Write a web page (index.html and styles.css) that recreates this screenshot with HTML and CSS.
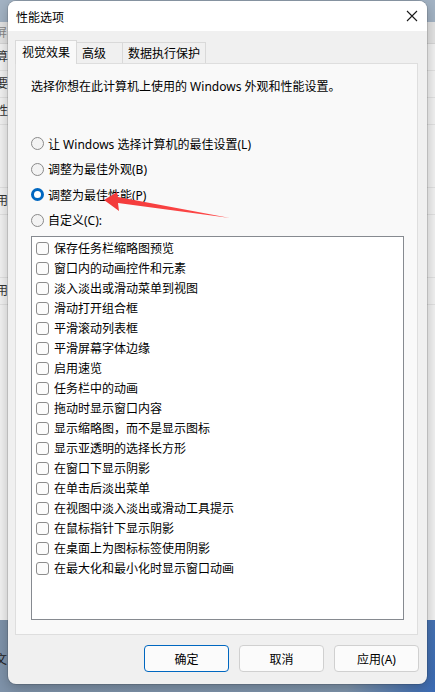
FILE: index.html
```html
<!DOCTYPE html>
<html lang="zh-CN">
<head>
    <meta charset="UTF-8">
    <meta name="viewport" content="width=device-width, initial-scale=1.0">
    <title>性能选项</title>
    <link rel="stylesheet" href="styles.css">
</head>
<body>
    <div class="desktop">
        <div class="bg-top"></div>
        <div class="bg-window">
            <div class="bg-toolbar">屏</div>
            <div class="bg-item">算</div>
            <div class="bg-item">要</div>
            <div class="bg-item">性</div>
            <div class="bg-gap"></div>
            <div class="bg-item">用</div>
            <div class="bg-gap"></div>
            <div class="bg-item">用</div>
        </div>
        <div class="bg-bottom">
            <div class="bg-icon">文</div>
        </div>
    </div>

    <div class="dialog">
        <div class="titlebar">
            <span class="title">性能选项</span>
            <svg class="close" width="12" height="12" viewBox="0 0 12 12">
                <path d="M1 1 L11 11 M11 1 L1 11" stroke="#1a1a1a" stroke-width="1.1" fill="none"/>
            </svg>
        </div>

        <div class="content">
            <ul class="tabs">
                <li class="tab active">视觉效果</li>
                <li class="tab">高级</li>
                <li class="tab">数据执行保护</li>
            </ul>

            <div class="panel">
                <p class="intro">选择你想在此计算机上使用的 Windows 外观和性能设置。</p>

                <div class="radios">
                    <label class="radio"><span class="dot"></span>让 Windows 选择计算机的最佳设置(L)</label>
                    <label class="radio"><span class="dot"></span>调整为最佳外观(B)</label>
                    <label class="radio"><span class="dot checked"></span>调整为最佳性能(P)</label>
                    <label class="radio"><span class="dot"></span>自定义(C):</label>
                </div>

                <div class="listbox">
                    <div class="check"><span class="box"></span>保存任务栏缩略图预览</div>
                    <div class="check"><span class="box"></span>窗口内的动画控件和元素</div>
                    <div class="check"><span class="box"></span>淡入淡出或滑动菜单到视图</div>
                    <div class="check"><span class="box"></span>滑动打开组合框</div>
                    <div class="check"><span class="box"></span>平滑滚动列表框</div>
                    <div class="check"><span class="box"></span>平滑屏幕字体边缘</div>
                    <div class="check"><span class="box"></span>启用速览</div>
                    <div class="check"><span class="box"></span>任务栏中的动画</div>
                    <div class="check"><span class="box"></span>拖动时显示窗口内容</div>
                    <div class="check"><span class="box"></span>显示缩略图，而不是显示图标</div>
                    <div class="check"><span class="box"></span>显示亚透明的选择长方形</div>
                    <div class="check"><span class="box"></span>在窗口下显示阴影</div>
                    <div class="check"><span class="box"></span>在单击后淡出菜单</div>
                    <div class="check"><span class="box"></span>在视图中淡入淡出或滑动工具提示</div>
                    <div class="check"><span class="box"></span>在鼠标指针下显示阴影</div>
                    <div class="check"><span class="box"></span>在桌面上为图标标签使用阴影</div>
                    <div class="check"><span class="box"></span>在最大化和最小化时显示窗口动画</div>
                </div>

                <!-- red annotation arrow drawn over the radio list -->
                <svg class="arrow" width="140" height="40" viewBox="0 0 140 40">
                    <defs>
                        <linearGradient id="ar" x1="0" y1="0" x2="1" y2="0">
                            <stop offset="0" stop-color="#f23a3a"/>
                            <stop offset="1" stop-color="#ff4a4a"/>
                        </linearGradient>
                    </defs>
                    <polygon points="2,11 15,3 16,8 128,29 16,14 17,22" fill="url(#ar)"/>
                </svg>
            </div>

            <div class="buttons">
                <button class="btn default">确定</button>
                <button class="btn">取消</button>
                <button class="btn">应用(A)</button>
            </div>
        </div>
    </div>
</body>
</html>
```

FILE: styles.css
```css
html, body {
    margin: 0;
    padding: 0;
}

body {
    width: 435px;
    height: 692px;
    overflow: hidden;
    position: relative;
    font-family: "Noto Sans", "Noto Sans CJK SC", sans-serif;
    font-size: 12px;
    color: #000;
}

/* desktop behind the dialog */
.desktop {
    height: 692px;
    display: flex;
    flex-direction: column;
}

.bg-top {
    height: 22px;
    background-color: #a3b3c4;
}

.bg-window {
    height: 598px;
    background-color: #f3f3f3;
    color: #333;
}

.bg-toolbar {
    height: 21px;
    line-height: 21px;
    background-color: #e4e4e4;
    color: #888;
    border-bottom: 1px solid #d6d6d6;
    text-indent: -5px;
}

.bg-item {
    height: 26px;
    line-height: 26px;
    text-indent: -4px;
    border-bottom: 1px solid #e2e2e2;
}

.bg-gap {
    height: 62px;
    border-bottom: 1px solid #e2e2e2;
}

.bg-bottom {
    flex: 1;
    background: linear-gradient(100deg, #7f93aa 0%, #8197ae 80%, #3a6bb5 100%);
}

.bg-icon {
    margin-top: 30px;
    text-indent: -5px;
    color: #222;
}

/* dialog window */
.dialog {
    position: absolute;
    left: 8px;
    top: 1px;
    width: 419px;
    height: 683px;
    background-color: #f0f0f0;
    border-radius: 8px;
    overflow: hidden;
    box-shadow: 0 0 0 1px rgba(0, 0, 0, 0.12), 0 4px 14px rgba(0, 0, 0, 0.25);
    display: flex;
    flex-direction: column;
}

.titlebar {
    height: 30px;
    background-color: #fff;
    display: flex;
    align-items: center;
    justify-content: space-between;
    padding: 0 9px 0 8px;
}

.title {
    font-size: 12px;
    margin-top: 1px;
}

.close {
    margin-top: -1px;
}

.content {
    padding: 10px 8px 0 7px;
}

.tabs {
    list-style: none;
    margin: 0;
    padding: 0;
    display: flex;
    align-items: flex-end;
    height: 23px;
}

.tab {
    height: 21px;
    line-height: 21px;
    padding: 0 5px;
    background-color: #f0f0f0;
    border: 1px solid #d9d9d9;
    border-bottom: none;
    margin-left: -1px;
}

.tab:nth-child(2) {
    width: 35px;
}

.tab.active {
    height: 23px;
    line-height: 23px;
    background-color: #f9f9f9;
    margin-left: 0;
    padding: 0 6px;
    position: relative;
    z-index: 1;
}

.panel {
    position: relative;
    width: 401px;
    height: 570px;
    background-color: #f9f9f9;
    border: 1px solid #dedede;
    margin-top: -1px;
}

.intro {
    margin: 15px 0 0 15px;
    line-height: 16px;
}

.radios {
    margin: 36px 0 0 15px;
    display: flex;
    flex-direction: column;
}

.radio {
    height: 25.5px;
    display: flex;
    align-items: center;
}

.radio .dot {
    width: 11px;
    height: 11px;
    border: 1px solid #8a8a8a;
    border-radius: 50%;
    background-color: #f3f3f3;
    margin-right: 4px;
}

.radio .dot.checked {
    width: 7px;
    height: 7px;
    border: 3px solid #0067c0;
    background-color: #fff;
}

.listbox {
    margin: 3px 0 0 15px;
    width: 371px;
    height: 381px;
    background-color: #fff;
    border: 1px solid #868a90;
    padding-top: 1px;
}

.check {
    height: 20px;
    display: flex;
    align-items: center;
    padding-left: 4px;
}

.check .box {
    width: 11px;
    height: 11px;
    border: 1px solid #8c8c8c;
    border-radius: 3px;
    background-color: #fbfbfb;
    margin-right: 5px;
}

.arrow {
    position: absolute;
    left: 86px;
    top: 125px;
}

.buttons {
    display: flex;
    justify-content: flex-end;
    gap: 10px;
    margin-top: 10px;
}

.btn {
    width: 85px;
    height: 27px;
    font-family: "Noto Sans", "Noto Sans CJK SC", sans-serif;
    font-size: 12px;
    color: #000;
    background-color: #fbfbfb;
    border: 1px solid #d0d0d0;
    border-radius: 4px;
    padding: 0;
}

.btn.default {
    border-color: #0067c0;
}
```
